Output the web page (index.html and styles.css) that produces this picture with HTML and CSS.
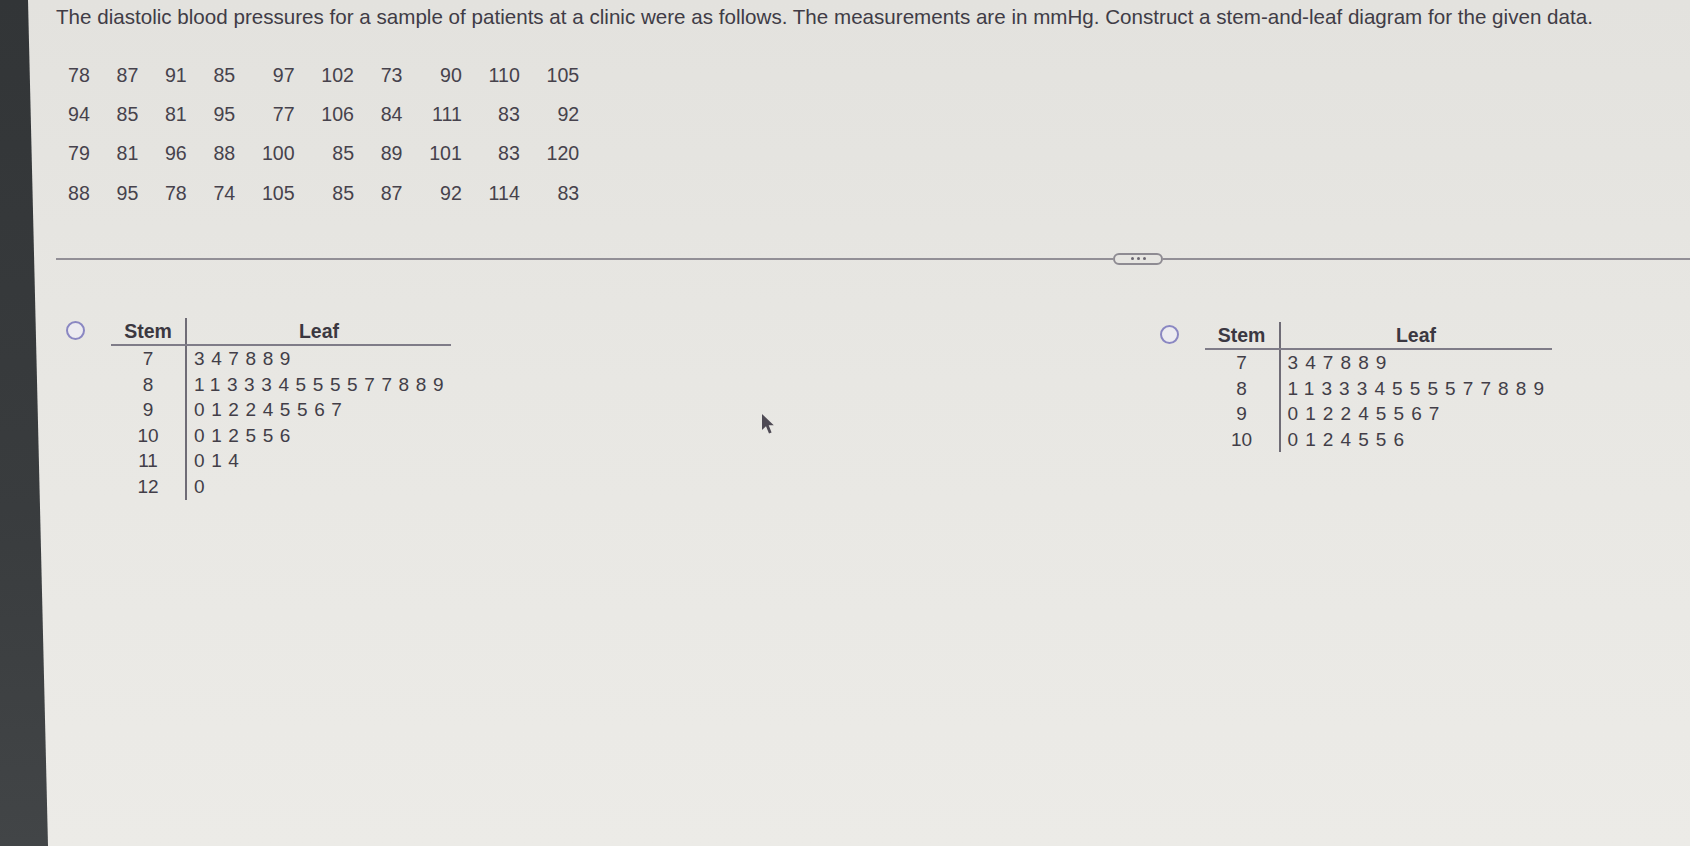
FILE: index.html
```html
<!DOCTYPE html>
<html lang="en">
<head>
<meta charset="utf-8">
<title>Stem-and-leaf question</title>
<link rel="stylesheet" href="styles.css">
</head>
<body>
<div class="screen">
  <div class="bezel"></div>
  <main class="page">
    <p class="prompt">The diastolic blood pressures for a sample of patients at a clinic were as follows. The measurements are in mmHg. Construct a stem-and-leaf diagram for the given data.</p>

    <div class="data">
      <span>78</span><span>87</span><span>91</span><span>85</span><span>97</span><span>102</span><span>73</span><span>90</span><span>110</span><span>105</span>
      <span>94</span><span>85</span><span>81</span><span>95</span><span>77</span><span>106</span><span>84</span><span>111</span><span>83</span><span>92</span>
      <span>79</span><span>81</span><span>96</span><span>88</span><span>100</span><span>85</span><span>89</span><span>101</span><span>83</span><span>120</span>
      <span>88</span><span>95</span><span>78</span><span>74</span><span>105</span><span>85</span><span>87</span><span>92</span><span>114</span><span>83</span>
    </div>

    <div class="divider">
      <span class="rule rule-left"></span>
      <span class="more"><i></i><i></i><i></i></span>
      <span class="rule rule-right"></span>
    </div>

    <div class="options">
      <div class="option">
        <span class="radio"></span>
        <table class="sl">
          <thead>
            <tr><th class="stem">Stem</th><th class="leaf">Leaf</th></tr>
          </thead>
          <tbody>
            <tr><td class="stem">7</td><td class="leaf">347889</td></tr>
            <tr><td class="stem">8</td><td class="leaf">113334555577889</td></tr>
            <tr><td class="stem">9</td><td class="leaf">012245567</td></tr>
            <tr><td class="stem">10</td><td class="leaf">012556</td></tr>
            <tr><td class="stem">11</td><td class="leaf">014</td></tr>
            <tr><td class="stem">12</td><td class="leaf">0</td></tr>
          </tbody>
        </table>
      </div>

      <div class="option option-right">
        <span class="radio"></span>
        <table class="sl sl-wide">
          <thead>
            <tr><th class="stem">Stem</th><th class="leaf">Leaf</th></tr>
          </thead>
          <tbody>
            <tr><td class="stem">7</td><td class="leaf">347889</td></tr>
            <tr><td class="stem">8</td><td class="leaf">113334555577889</td></tr>
            <tr><td class="stem">9</td><td class="leaf">012245567</td></tr>
            <tr><td class="stem">10</td><td class="leaf">0124556</td></tr>
          </tbody>
        </table>
      </div>
    </div>
  </main>

  <svg class="cursor" width="14" height="22" viewBox="0 0 14 22" aria-hidden="true">
    <path d="M1 1 L1 17 L5 13.2 L8 20.5 L10.6 19.4 L7.7 12.3 L12.8 12.3 Z" fill="#4f4b55"/>
  </svg>
</div>
</body>
</html>
```

FILE: styles.css
```css
html, body {
  margin: 0;
  padding: 0;
}

body {
  font-family: "Liberation Sans", Arial, sans-serif;
  color: #403c46;
  background: #e7e6e2;
}

.screen {
  position: relative;
  display: flex;
  width: 1690px;
  height: 846px;
  overflow: hidden;
  background: linear-gradient(180deg, #e3e2de 0%, #e8e7e3 45%, #ecebe7 100%);
}

.bezel {
  flex: 0 0 48px;
  background: linear-gradient(180deg, #323537 0%, #393c3e 60%, #424547 100%);
  clip-path: polygon(0 0, 28px 0, 48px 100%, 0 100%);
}

.page {
  flex: 1;
  padding-left: 8px;
  min-width: 0;
}

.prompt {
  margin: 6px 0 0;
  font-size: 20.6px;
  line-height: 22px;
  white-space: nowrap;
  color: #403c46;
}

.data {
  display: grid;
  grid-template-columns: repeat(10, auto);
  justify-content: start;
  justify-items: end;
  column-gap: 26.7px;
  row-gap: 17.3px;
  margin: 35.7px 0 0 12px;
  font-size: 19.6px;
  line-height: 22px;
  color: #46424c;
}

.divider {
  display: flex;
  align-items: center;
  height: 12px;
  margin-top: 49.4px;
}

.rule {
  height: 2px;
  background: #928f96;
}

.rule-left {
  flex: 0 0 1057px;
}

.rule-right {
  flex: 1;
}

.more {
  flex: 0 0 auto;
  box-sizing: border-box;
  width: 50px;
  height: 12px;
  border: 2px solid #8e8b92;
  border-radius: 6px;
  display: flex;
  align-items: center;
  justify-content: center;
  gap: 3px;
  background: #e6e5e1;
}

.more i {
  display: block;
  width: 3px;
  height: 3px;
  border-radius: 50%;
  background: #6c6872;
}

.options {
  display: grid;
  grid-template-columns: 1094px auto;
  align-items: start;
  margin-top: 53px;
  padding-left: 10px;
}

.option {
  display: flex;
  align-items: flex-start;
  gap: 26px;
}

.option-right {
  margin-top: 4px;
  gap: 25.5px;
}

.radio {
  flex: none;
  box-sizing: border-box;
  width: 19px;
  height: 19px;
  margin-top: 3.5px;
  border: 2px solid #8a87c2;
  border-radius: 50%;
  background: #ecebf0;
}

.sl {
  border-collapse: collapse;
  border-spacing: 0;
  color: #423e48;
}

.sl th,
.sl td {
  padding: 0;
  font-weight: normal;
  white-space: nowrap;
}

.sl th {
  height: 26px;
  font-size: 19.5px;
  font-weight: bold;
  line-height: 26px;
  border-bottom: 2px solid #7f7c88;
  color: #3b3841;
}

.sl td {
  height: 25.6px;
  font-size: 19px;
  line-height: 25.6px;
}

.sl .stem {
  width: 74px;
  text-align: center;
}

.sl .leaf {
  width: 257px;
  border-left: 2px solid #6f6c76;
}

.sl th.leaf {
  text-align: center;
}

.sl td.leaf {
  padding-left: 7px;
  letter-spacing: 6.6px;
  text-align: left;
}

.sl-wide .leaf {
  width: 264px;
}

.sl-wide td.leaf {
  letter-spacing: 7.1px;
}

.cursor {
  position: absolute;
  left: 761px;
  top: 413px;
}
```
